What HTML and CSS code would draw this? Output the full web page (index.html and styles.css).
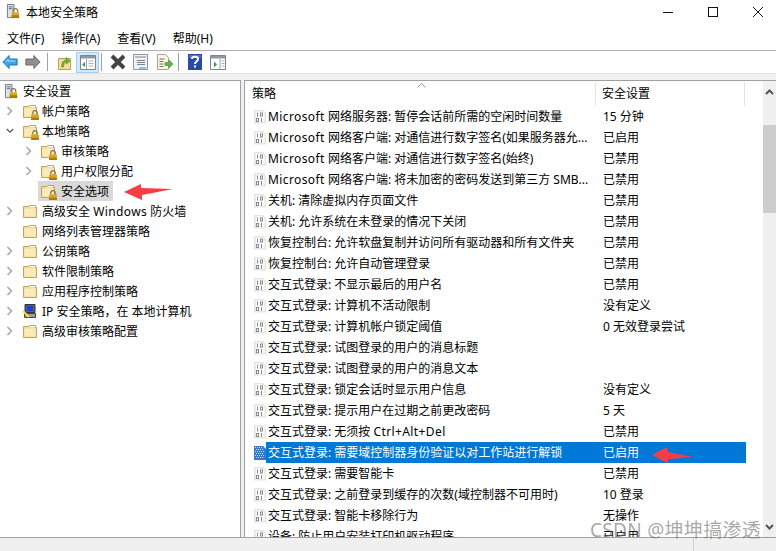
FILE: index.html
```html
<!DOCTYPE html>
<html>
<head>
    <title>本地安全策略</title>
    <link rel="stylesheet" href="styles.css">
</head>
<body>
<svg class="defs" width="0" height="0">
    <defs>
        <symbol id="folder" viewBox="0 0 16 16">
            <path d="M1.500 3.500h5l1-1h6v2h1v10h-13z" fill="#f6dd94" stroke="#bda567"/>
            <path d="M2.500 5.500h11v8h-11z" fill="#fbebbb"/>
            <path d="M8 3.500h5" stroke="#fff"/>
        </symbol>
        <symbol id="lock" viewBox="0 0 9 9">
            <path d="M2.500 4V2.500a2 2 0 0 1 4 0V4" fill="none" stroke="#8a7a50" stroke-width="1.200"/>
            <rect x="1" y="4" width="7" height="5" fill="#d9a520"/>
            <rect x="1" y="7" width="7" height="2" fill="#a87c12"/>
        </symbol>
        <symbol id="policy" viewBox="0 0 14 16">
            <path d="M1 1h9l3 3v11l-2-1-2 1-2-1-2 1-2-1-2 1z" fill="#e4e4e4"/>
            <path d="M2.500 2.500h7l2 2v8.300l-.6-.3-2 1-2-1-2 1-2-1z" fill="#fff"/>
            <path d="M4 3.500h1v4H4zM7 3.500h3v4H7zM8 4.500v2h1v-2zM3 9h3v4H3zM4 10v2h1v-2zM8 9h1v4H8z" fill="#8a8a8a"/>
        </symbol>
        <symbol id="policy-on" viewBox="0 0 14 16">
            <path d="M1 1h9l3 3v11H1z" fill="#3b78c8"/>
            <path d="M2 2h1v1H2zM4 2h1v1H4zM6 2h1v1H6zM8 2h1v1H8zM3 4h1v1H3zM5 4h1v1H5zM7 4h1v1H7zM9 4h1v1H9zM2 6h1v1H2zM4 6h1v1H4zM6 6h1v1H6zM8 6h1v1H8zM10 6h1v1h-1zM3 8h1v1H3zM5 8h1v1H5zM7 8h1v1H7zM9 8h1v1H9zM2 10h1v1H2zM4 10h1v1H4zM6 10h1v1H6zM8 10h1v1H8zM10 10h1v1h-1zM3 12h1v1H3zM5 12h1v1H5zM7 12h1v1H7zM9 12h1v1H9z" fill="#c4dcf6"/>
        </symbol>
        <symbol id="server" viewBox="0 0 16 18">
            <path d="M1.500 1.500h7v14h-7z" fill="#dfe3e8" stroke="#6d7680"/>
            <path d="M3 4h4M3 6h4" stroke="#59636d"/>
            <path d="M7.500 10V8.500a2.500 2.500 0 0 1 5 0V10" fill="none" stroke="#8a7a50" stroke-width="1.300"/>
            <rect x="6" y="10" width="8" height="6" fill="#dba81f"/>
            <rect x="6" y="13" width="8" height="3" fill="#a87c12"/>
        </symbol>
        <symbol id="chev-r" viewBox="0 0 8 10">
            <path d="M1.500 1l4 4-4 4" fill="none" stroke="#a6a6a6" stroke-width="1.500"/>
        </symbol>
        <symbol id="chev-d" viewBox="0 0 10 8">
            <path d="M1 1.500l4 4 4-4" fill="none" stroke="#555" stroke-width="1.500"/>
        </symbol>
    </defs>
</svg>

<div class="window">
    <div class="titlebar">
        <svg class="title-icon" width="15" height="17"><use href="#server"/></svg>
        <span class="title-text">本地安全策略</span>
        <div class="win-buttons">
            <svg width="12" height="12" viewBox="0 0 12 12"><path d="M1 6.500h10" stroke="#111"/></svg>
            <svg width="12" height="12" viewBox="0 0 12 12"><rect x="1.500" y="1.500" width="9" height="9" fill="none" stroke="#111"/></svg>
            <svg width="12" height="12" viewBox="0 0 12 12"><path d="M1 1l10 10M11 1L1 11" stroke="#111"/></svg>
        </div>
    </div>

    <div class="menubar">
        <span>文件(F)</span>
        <span>操作(A)</span>
        <span>查看(V)</span>
        <span>帮助(H)</span>
    </div>

    <div class="toolbar">
        <svg class="tool-back" width="16" height="16" viewBox="0 0 18 16" preserveAspectRatio="none"><path d="M1 8l7-6.500V5h9v6H8v3.500z" fill="#3fa4ea" stroke="#1d6fb8"/><path d="M4 8l3-3v2h8" fill="none" stroke="#b5e0fb"/></svg>
        <svg class="tool-fwd" width="16" height="16" viewBox="0 0 18 16" preserveAspectRatio="none"><path d="M17 8l-7-6.500V5H1v6h9v3.500z" fill="#8f8f8f" stroke="#666"/></svg>
        <i class="tool-sep"></i>
        <svg class="tool-up" width="15" height="16" viewBox="0 0 16 16" preserveAspectRatio="none"><path d="M1.500 4.500h13v11h-13z" fill="#f3dc9c" stroke="#b39a5c"/><path d="M5 13c0-5 2-7 5-7V3.500l4 3.500-4 3V8c-2 0-3 2-3 5z" fill="#6fb52c" stroke="#4e8a1a" stroke-width=".6"/></svg>
        <span class="tool-on">
            <svg width="16" height="15" viewBox="0 0 16 15"><path d="M.5.500h15v14H.5z" fill="#fff" stroke="#7b8691"/><path d="M1 1h14v2.500H1z" fill="#8d98a3"/><path d="M6.500 4v10" stroke="#9aa4ae"/><path d="M5 7l-3 2.500L5 12z" fill="#2ea043"/><path d="M8.500 6h5M8.500 8.500h5M8.500 11h5" stroke="#aab3bc"/></svg>
        </span>
        <i class="tool-sep sep-near"></i>
        <svg class="tool-x" width="16" height="16" viewBox="0 0 16 16"><path d="M2 2l12 12M14 2L2 14" stroke="#444" stroke-width="4"/></svg>
        <svg class="tool-prop" width="15" height="16" viewBox="0 0 15 16"><path d="M.5.500h14v15H.5z" fill="#f2f2f2" stroke="#8d949b"/><path d="M2 2h11v2H2z" fill="#b5bcc4"/><path d="M4 6.500h8M4 8.500h8M4 10.500h8" stroke="#7d858c"/><path d="M6 14h7" stroke="#3c90d8"/></svg>
        <svg class="tool-exp" width="17" height="16" viewBox="0 0 17 16"><path d="M1.500.500h8l3 3v12h-11z" fill="#faf6e6" stroke="#a8a390"/><path d="M3.500 5h5M3.500 7.500h4M3.500 10h4M3.500 12.500h4" stroke="#77736a"/><path d="M9 8.500h4V6l4 4-4 4v-2.500H9z" fill="#5dbb46" stroke="#3e8a2c" stroke-width=".6"/></svg>
        <i class="tool-sep"></i>
        <svg class="tool-help" width="14" height="16" viewBox="0 0 14 16"><rect width="14" height="16" fill="#2b4aa8"/><path d="M1 1h12v3H1z" fill="#4d6fd0"/><path d="M4 5c0-3 6-3 6 0 0 2.500-3 2.500-3 5" fill="none" stroke="#fff" stroke-width="2"/><rect x="6" y="11.500" width="2" height="2" fill="#fff"/></svg>
        <svg width="16" height="15" viewBox="0 0 16 15"><path d="M.5.500h15v14H.5z" fill="#fff" stroke="#7b8691"/><path d="M1 1h14v2.500H1z" fill="#8d98a3"/><path d="M10 4v10" stroke="#9aa4ae"/><path d="M4 6.500l3 3-3 3z" fill="#2ea043"/><path d="M11.500 6h3M11.500 8.500h3M11.500 11h3" stroke="#aab3bc"/></svg>
    </div>

    <div class="panes">
        <div class="tree">
            <div class="node">
                <svg class="root-ico" width="15" height="17"><use href="#server"/></svg>
                <span class="root-label">安全设置</span>
            </div>
            <div class="node lv1">
                <svg class="chev" width="8" height="10"><use href="#chev-r"/></svg>
                <span class="fld lck"><svg width="16" height="16"><use href="#folder"/></svg><svg class="lk" width="10" height="10"><use href="#lock"/></svg></span>
                <span>帐户策略</span>
            </div>
            <div class="node lv1">
                <svg class="chev" width="8" height="10"><use href="#chev-d"/></svg>
                <span class="fld lck"><svg width="16" height="16"><use href="#folder"/></svg><svg class="lk" width="10" height="10"><use href="#lock"/></svg></span>
                <span>本地策略</span>
            </div>
            <div class="node lv2">
                <svg class="chev" width="8" height="10"><use href="#chev-r"/></svg>
                <span class="fld lck"><svg width="16" height="16"><use href="#folder"/></svg><svg class="lk" width="10" height="10"><use href="#lock"/></svg></span>
                <span>审核策略</span>
            </div>
            <div class="node lv2">
                <svg class="chev" width="8" height="10"><use href="#chev-r"/></svg>
                <span class="fld lck"><svg width="16" height="16"><use href="#folder"/></svg><svg class="lk" width="10" height="10"><use href="#lock"/></svg></span>
                <span>用户权限分配</span>
            </div>
            <div class="node lv2">
                <span class="chev-gap"></span>
                <div class="node-sel">
                    <span class="fld lck"><svg width="16" height="16"><use href="#folder"/></svg><svg class="lk" width="10" height="10"><use href="#lock"/></svg></span>
                    <span>安全选项</span>
                </div>
            </div>
            <div class="node lv1">
                <svg class="chev" width="8" height="10"><use href="#chev-r"/></svg>
                <span class="fld"><svg width="16" height="16"><use href="#folder"/></svg></span>
                <span>高级安全 <span class="lat">Windows</span> 防火墙</span>
            </div>
            <div class="node lv1">
                <span class="chev-gap"></span>
                <span class="fld"><svg width="16" height="16"><use href="#folder"/></svg></span>
                <span>网络列表管理器策略</span>
            </div>
            <div class="node lv1">
                <svg class="chev" width="8" height="10"><use href="#chev-r"/></svg>
                <span class="fld"><svg width="16" height="16"><use href="#folder"/></svg></span>
                <span>公钥策略</span>
            </div>
            <div class="node lv1">
                <svg class="chev" width="8" height="10"><use href="#chev-r"/></svg>
                <span class="fld"><svg width="16" height="16"><use href="#folder"/></svg></span>
                <span>软件限制策略</span>
            </div>
            <div class="node lv1">
                <svg class="chev" width="8" height="10"><use href="#chev-r"/></svg>
                <span class="fld"><svg width="16" height="16"><use href="#folder"/></svg></span>
                <span>应用程序控制策略</span>
            </div>
            <div class="node lv1">
                <svg class="chev" width="8" height="10"><use href="#chev-r"/></svg>
                <span class="fld">
                    <svg width="16" height="16" viewBox="0 0 16 16"><path d="M3 1.500h10v8H3z" fill="#59616b" stroke="#333"/><path d="M5 3h6v5H5z" fill="#1f3fd0"/><path d="M2.500 10.500h11v4h-11z" fill="#9a9fa6" stroke="#444"/><path d="M1 8l6 6" stroke="#f2e030" stroke-width="2"/></svg>
                </span>
                <span>IP 安全策略，在 本地计算机</span>
            </div>
            <div class="node lv1">
                <svg class="chev" width="8" height="10"><use href="#chev-r"/></svg>
                <span class="fld"><svg width="16" height="16"><use href="#folder"/></svg></span>
                <span>高级审核策略配置</span>
            </div>
        </div>

        <div class="list">
            <div class="list-main">
                <div class="list-head">
                    <div class="col-name">策略<svg class="sort" width="9" height="5" viewBox="0 0 9 5"><path d="M.5 4.500l4-4 4 4" fill="none" stroke="#9a9a9a"/></svg></div>
                    <div class="col-set">安全设置</div>
                    <div class="col-rest"></div>
                </div>
                <div class="rows">
                    <div class="row"><svg width="14" height="16"><use href="#policy"/></svg><span class="r-name"><span class="lat">Microsoft</span> 网络服务器: 暂停会话前所需的空闲时间数量</span><span class="r-set">15 分钟</span></div>
                    <div class="row"><svg width="14" height="16"><use href="#policy"/></svg><span class="r-name"><span class="lat">Microsoft</span> 网络客户端: 对通信进行数字签名(如果服务器允...</span><span class="r-set">已启用</span></div>
                    <div class="row"><svg width="14" height="16"><use href="#policy"/></svg><span class="r-name"><span class="lat">Microsoft</span> 网络客户端: 对通信进行数字签名(始终)</span><span class="r-set">已禁用</span></div>
                    <div class="row"><svg width="14" height="16"><use href="#policy"/></svg><span class="r-name"><span class="lat">Microsoft</span> 网络客户端: 将未加密的密码发送到第三方 SMB...</span><span class="r-set">已禁用</span></div>
                    <div class="row"><svg width="14" height="16"><use href="#policy"/></svg><span class="r-name">关机: 清除虚拟内存页面文件</span><span class="r-set">已禁用</span></div>
                    <div class="row"><svg width="14" height="16"><use href="#policy"/></svg><span class="r-name">关机: 允许系统在未登录的情况下关闭</span><span class="r-set">已禁用</span></div>
                    <div class="row"><svg width="14" height="16"><use href="#policy"/></svg><span class="r-name">恢复控制台: 允许软盘复制并访问所有驱动器和所有文件夹</span><span class="r-set">已禁用</span></div>
                    <div class="row"><svg width="14" height="16"><use href="#policy"/></svg><span class="r-name">恢复控制台: 允许自动管理登录</span><span class="r-set">已禁用</span></div>
                    <div class="row"><svg width="14" height="16"><use href="#policy"/></svg><span class="r-name">交互式登录: 不显示最后的用户名</span><span class="r-set">已禁用</span></div>
                    <div class="row"><svg width="14" height="16"><use href="#policy"/></svg><span class="r-name">交互式登录: 计算机不活动限制</span><span class="r-set">没有定义</span></div>
                    <div class="row"><svg width="14" height="16"><use href="#policy"/></svg><span class="r-name">交互式登录: 计算机帐户锁定阈值</span><span class="r-set">0 无效登录尝试</span></div>
                    <div class="row"><svg width="14" height="16"><use href="#policy"/></svg><span class="r-name">交互式登录: 试图登录的用户的消息标题</span><span class="r-set"></span></div>
                    <div class="row"><svg width="14" height="16"><use href="#policy"/></svg><span class="r-name">交互式登录: 试图登录的用户的消息文本</span><span class="r-set"></span></div>
                    <div class="row"><svg width="14" height="16"><use href="#policy"/></svg><span class="r-name">交互式登录: 锁定会话时显示用户信息</span><span class="r-set">没有定义</span></div>
                    <div class="row"><svg width="14" height="16"><use href="#policy"/></svg><span class="r-name">交互式登录: 提示用户在过期之前更改密码</span><span class="r-set">5 天</span></div>
                    <div class="row"><svg width="14" height="16"><use href="#policy"/></svg><span class="r-name">交互式登录: 无须按 <span class="lat">Ctrl+Alt+Del</span></span><span class="r-set">已禁用</span></div>
                    <div class="row row-sel"><svg width="14" height="16"><use href="#policy-on"/></svg><span class="r-name">交互式登录: 需要域控制器身份验证以对工作站进行解锁</span><span class="r-set">已启用</span></div>
                    <div class="row"><svg width="14" height="16"><use href="#policy"/></svg><span class="r-name">交互式登录: 需要智能卡</span><span class="r-set">已禁用</span></div>
                    <div class="row"><svg width="14" height="16"><use href="#policy"/></svg><span class="r-name">交互式登录: 之前登录到缓存的次数(域控制器不可用时)</span><span class="r-set">10 登录</span></div>
                    <div class="row"><svg width="14" height="16"><use href="#policy"/></svg><span class="r-name">交互式登录: 智能卡移除行为</span><span class="r-set">无操作</span></div>
                    <div class="row"><svg width="14" height="16"><use href="#policy"/></svg><span class="r-name">设备: 防止用户安装打印机驱动程序</span><span class="r-set">已启用</span></div>
                </div>
            </div>
            <div class="scrollbar">
                <svg class="sb-arrow" width="9" height="6" viewBox="0 0 9 6"><path d="M1 5l3.500-3.500L8 5" fill="none" stroke="#555" stroke-width="2"/></svg>
                <div class="sb-thumb"></div>
                <div class="sb-fill"></div>
                <svg class="sb-arrow" width="9" height="6" viewBox="0 0 9 6"><path d="M1 1l3.500 3.500L8 1" fill="none" stroke="#555" stroke-width="2"/></svg>
            </div>
        </div>
    </div>

    <div class="statusbar"><i></i></div>

    <svg class="arrow arrow-tree" width="50" height="18" viewBox="0 0 50 18"><path d="M0 9l17-8 0 4 32 1-31 6v5z" fill="#f73c45"/></svg>
    <svg class="arrow arrow-row" width="42" height="16" viewBox="0 0 42 16"><path d="M0 8l15-8 1 5 25 5-24 2-2 4z" fill="#f73c45"/></svg>
    <div class="watermark">CSDN @坤坤搞渗透</div>
</div>
</body>
</html>
```

FILE: styles.css
```css
* {
    box-sizing: border-box;
}

html, body {
    margin: 0;
    padding: 0;
}

body {
    font-family: "Noto Sans", "Noto Sans CJK SC", sans-serif;
    font-size: 12px;
    color: #000;
    background: #fff;
}

.defs {
    position: absolute;
}

svg {
    display: block;
    flex: none;
}

.lat {
    letter-spacing: 0.4px;
}

.window {
    position: relative;
    width: 776px;
    height: 551px;
    display: flex;
    flex-direction: column;
    overflow: hidden;
}

.titlebar {
    height: 27px;
    flex: none;
    display: flex;
    align-items: center;
    padding-left: 6px;
    padding-bottom: 4px;
}

.title-text {
    margin-left: 5px;
}

.win-buttons {
    margin-left: auto;
    margin-right: 12px;
    display: flex;
    gap: 33px;
}

.menubar {
    height: 23px;
    flex: none;
    display: flex;
    gap: 17px;
    padding-left: 7px;
    align-items: center;
    line-height: 16px;
}

.toolbar {
    height: 24px;
    flex: none;
    display: flex;
    align-items: center;
    padding-left: 2px;
    border-top: 1px solid #b0b0b0;
    border-bottom: 1px solid #e3e3e3;
}

.tool-back {
    margin-right: 7px;
}

.tool-fwd {
    margin-right: 6px;
}

.tool-sep {
    width: 1px;
    height: 18px;
    background: #a0a0a0;
    margin-right: 9px;
}

.tool-up {
    margin-right: 4px;
}

.tool-on {
    width: 23px;
    height: 21px;
    display: flex;
    align-items: center;
    justify-content: center;
    background: #d5e8f8;
    border: 1px solid #9fd0f5;
    margin-right: 2px;
}

.sep-near {
    margin-right: 8px;
}

.tool-x {
    margin-right: 7px;
}

.tool-prop {
    margin-right: 8px;
}

.tool-exp {
    margin-right: 5px;
}

.tool-help {
    margin-right: 8px;
}

.panes {
    flex: 1;
    min-height: 0;
    display: flex;
    gap: 3px;
    background: #f0f0f0;
    padding-top: 6px;
}

.tree {
    width: 241px;
    flex: none;
    background: #fff;
    border-top: 1px solid #a0a0a0;
    border-right: 1px solid #a0a0a0;
}

.node {
    height: 20px;
    display: flex;
    align-items: center;
    white-space: nowrap;
}

.root-ico {
    margin-left: 4px;
}

.root-label {
    margin-left: 4px;
}

.lv1 {
    padding-left: 6px;
}

.lv2 {
    padding-left: 25px;
}

.chev {
    margin-right: 8px;
}

.chev-gap {
    width: 16px;
    flex: none;
}

.lv2 .chev {
    margin-right: 7px;
}

.lv2 .chev-gap {
    width: 13px;
}

.fld {
    position: relative;
    width: 16px;
    height: 16px;
    margin-right: 4px;
    flex: none;
}

.lv2 .fld {
    margin-right: 5px;
}

.lck .lk {
    position: absolute;
    right: -2px;
    bottom: -1px;
}

.node-sel {
    width: 75px;
    height: 20px;
    display: flex;
    align-items: center;
    padding-left: 2px;
    background: #d9d9d9;
}

.list {
    flex: 1;
    min-width: 0;
    display: flex;
    background: #fff;
    border-top: 1px solid #a0a0a0;
    border-left: 1px solid #a0a0a0;
}

.list-main {
    flex: 1;
    min-width: 0;
    overflow: hidden;
}

.list-head {
    height: 25px;
    display: flex;
    align-items: center;
}

.col-name {
    position: relative;
    width: 350px;
    height: 24px;
    line-height: 24px;
    padding-left: 7px;
}

.sort {
    position: absolute;
    left: 172px;
    top: 1px;
}

.col-set {
    width: 150px;
    height: 24px;
    line-height: 24px;
    padding-left: 6px;
    border-left: 1px solid #e3e3e3;
    border-right: 1px solid #e3e3e3;
}

.col-rest {
    flex: 1;
}

.rows {
    padding-left: 8px;
}

.row {
    height: 21px;
    display: flex;
    align-items: center;
    white-space: nowrap;
}

.r-name {
    width: 330px;
    height: 21px;
    line-height: 21px;
    padding-left: 1px;
    flex: none;
    overflow: hidden;
}

.r-set {
    flex: 1;
    padding-left: 6px;
    height: 21px;
    line-height: 21px;
}

.row-sel {
    width: 493px;
    color: #fff;
}

.row-sel .r-name {
    margin-left: -1px;
    padding-left: 2px;
    width: 331px;
    background: #0078d7;
}

.row-sel .r-set {
    background: #0078d7;
}

.scrollbar {
    width: 13px;
    flex: none;
    display: flex;
    flex-direction: column;
    align-items: center;
    background: #f0f0f0;
    padding: 8px 0 7px;
}

.sb-thumb {
    width: 13px;
    height: 88px;
    background: #cdcdcd;
    margin-top: 30px;
}

.sb-fill {
    flex: 1;
}

.statusbar {
    height: 14px;
    flex: none;
    background: #f0f0f0;
    border-top: 1px solid #a0a0a0;
    padding-left: 693px;
}

.statusbar i {
    display: block;
    width: 1px;
    height: 13px;
    background: #d0d0d0;
}

.arrow {
    position: absolute;
}

.arrow-tree {
    left: 124px;
    top: 183px;
}

.arrow-row {
    left: 652px;
    top: 447px;
}

.watermark {
    position: absolute;
    left: 590px;
    top: 518px;
    font-size: 19px;
    letter-spacing: 0.3px;
    line-height: 24px;
    color: rgba(110, 110, 110, 0.6);
    white-space: nowrap;
}
```
